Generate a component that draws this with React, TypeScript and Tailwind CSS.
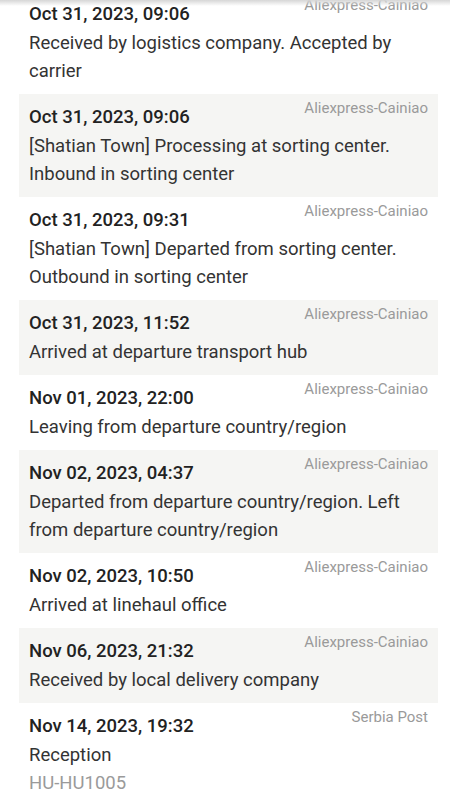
import React from "react";

type Ev = { date: string; source: string; lines: string[]; code?: string };

const events: Ev[] = [
  { date: "Oct 31, 2023, 09:06", source: "Aliexpress-Cainiao", lines: ["Received by logistics company. Accepted by", "carrier"] },
  { date: "Oct 31, 2023, 09:06", source: "Aliexpress-Cainiao", lines: ["[Shatian Town] Processing at sorting center.", "Inbound in sorting center"] },
  { date: "Oct 31, 2023, 09:31", source: "Aliexpress-Cainiao", lines: ["[Shatian Town] Departed from sorting center.", "Outbound in sorting center"] },
  { date: "Oct 31, 2023, 11:52", source: "Aliexpress-Cainiao", lines: ["Arrived at departure transport hub"] },
  { date: "Nov 01, 2023, 22:00", source: "Aliexpress-Cainiao", lines: ["Leaving from departure country/region"] },
  { date: "Nov 02, 2023, 04:37", source: "Aliexpress-Cainiao", lines: ["Departed from departure country/region. Left", "from departure country/region"] },
  { date: "Nov 02, 2023, 10:50", source: "Aliexpress-Cainiao", lines: ["Arrived at linehaul office"] },
  { date: "Nov 06, 2023, 21:32", source: "Aliexpress-Cainiao", lines: ["Received by local delivery company"] },
  { date: "Nov 14, 2023, 19:32", source: "Serbia Post", lines: ["Reception"], code: "HU-HU1005" },
];

export default function App() {
  return (
    <div
      className="relative w-[450px] h-[798px] overflow-hidden bg-white"
      style={{ fontFamily: "Roboto, 'Noto Sans', sans-serif" }}
    >
      <div className="absolute top-0 left-0 right-0 h-[6px] bg-gradient-to-b from-[#d6d6d6] to-transparent z-10" />
      <div className="mt-[-9px] pl-[19px] pr-[12px] flex flex-col">
        {events.map((e, i) => (
          <div
            key={i}
            className={`pl-[10px] pr-[10px] pt-[4px] pb-[9px] ${i % 2 === 1 ? "bg-[#f5f5f3]" : "bg-white"}`}
          >
            <div className="flex items-start justify-between">
              <div className="mt-[7px] text-[18.5px] leading-[24px] font-medium text-[#222]">{e.date}</div>
              <div className="text-[15px] leading-[20px] text-[#9a9a9a]">{e.source}</div>
            </div>
            <div className="mt-[3px] text-[18.5px] leading-[28px] text-[#333]">
              {e.lines.map((l, j) => (
                <div key={j} className="whitespace-nowrap">{l}</div>
              ))}
              {e.code && <div className="text-[#9a9a9a]">{e.code}</div>}
            </div>
          </div>
        ))}
      </div>
    </div>
  );
}
